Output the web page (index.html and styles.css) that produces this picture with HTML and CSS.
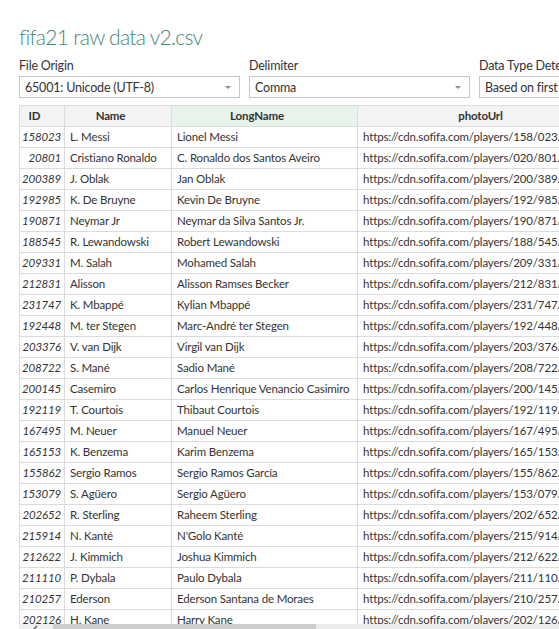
FILE: index.html
```html
<!DOCTYPE html>
<html lang="en">
<head>
<meta charset="utf-8">
<title>fifa21 raw data v2.csv</title>
<link rel="stylesheet" href="styles.css">
</head>
<body>
<div class="page">
  <h1 class="title">fifa21 raw data v2.csv</h1>
  <div class="options">
    <div class="field">
      <label class="label">File Origin</label>
      <div class="select"><span>65001: Unicode (UTF-8)</span><span class="caret"></span></div>
    </div>
    <div class="field">
      <label class="label">Delimiter</label>
      <div class="select"><span>Comma</span><span class="caret"></span></div>
    </div>
    <div class="field">
      <label class="label">Data Type Detection</label>
      <div class="select"><span>Based on first 200 rows</span><span class="caret"></span></div>
    </div>
  </div>
  <div class="grid-wrap">
    <table class="grid">
      <colgroup>
        <col class="c-id"><col class="c-name"><col class="c-long"><col class="c-url">
      </colgroup>
      <thead>
        <tr><th>ID</th><th>Name</th><th class="sel">LongName</th><th>photoUrl</th></tr>
      </thead>
      <tbody>
        <tr><td class="id">158023</td><td>L. Messi</td><td>Lionel Messi</td><td>https://cdn.sofifa.com/players/158/023/21_60.png</td></tr>
        <tr><td class="id">20801</td><td>Cristiano Ronaldo</td><td>C. Ronaldo dos Santos Aveiro</td><td>https://cdn.sofifa.com/players/020/801/21_60.png</td></tr>
        <tr><td class="id">200389</td><td>J. Oblak</td><td>Jan Oblak</td><td>https://cdn.sofifa.com/players/200/389/21_60.png</td></tr>
        <tr><td class="id">192985</td><td>K. De Bruyne</td><td>Kevin De Bruyne</td><td>https://cdn.sofifa.com/players/192/985/21_60.png</td></tr>
        <tr><td class="id">190871</td><td>Neymar Jr</td><td>Neymar da Silva Santos Jr.</td><td>https://cdn.sofifa.com/players/190/871/21_60.png</td></tr>
        <tr><td class="id">188545</td><td>R. Lewandowski</td><td>Robert Lewandowski</td><td>https://cdn.sofifa.com/players/188/545/21_60.png</td></tr>
        <tr><td class="id">209331</td><td>M. Salah</td><td>Mohamed Salah</td><td>https://cdn.sofifa.com/players/209/331/21_60.png</td></tr>
        <tr><td class="id">212831</td><td>Alisson</td><td>Alisson Ramses Becker</td><td>https://cdn.sofifa.com/players/212/831/21_60.png</td></tr>
        <tr><td class="id">231747</td><td>K. Mbappé</td><td>Kylian Mbappé</td><td>https://cdn.sofifa.com/players/231/747/21_60.png</td></tr>
        <tr><td class="id">192448</td><td>M. ter Stegen</td><td>Marc-André ter Stegen</td><td>https://cdn.sofifa.com/players/192/448/21_60.png</td></tr>
        <tr><td class="id">203376</td><td>V. van Dijk</td><td>Virgil van Dijk</td><td>https://cdn.sofifa.com/players/203/376/21_60.png</td></tr>
        <tr><td class="id">208722</td><td>S. Mané</td><td>Sadio Mané</td><td>https://cdn.sofifa.com/players/208/722/21_60.png</td></tr>
        <tr><td class="id">200145</td><td>Casemiro</td><td>Carlos Henrique Venancio Casimiro</td><td>https://cdn.sofifa.com/players/200/145/21_60.png</td></tr>
        <tr><td class="id">192119</td><td>T. Courtois</td><td>Thibaut Courtois</td><td>https://cdn.sofifa.com/players/192/119/21_60.png</td></tr>
        <tr><td class="id">167495</td><td>M. Neuer</td><td>Manuel Neuer</td><td>https://cdn.sofifa.com/players/167/495/21_60.png</td></tr>
        <tr><td class="id">165153</td><td>K. Benzema</td><td>Karim Benzema</td><td>https://cdn.sofifa.com/players/165/153/21_60.png</td></tr>
        <tr><td class="id">155862</td><td>Sergio Ramos</td><td>Sergio Ramos García</td><td>https://cdn.sofifa.com/players/155/862/21_60.png</td></tr>
        <tr><td class="id">153079</td><td>S. Agüero</td><td>Sergio Agüero</td><td>https://cdn.sofifa.com/players/153/079/21_60.png</td></tr>
        <tr><td class="id">202652</td><td>R. Sterling</td><td>Raheem Sterling</td><td>https://cdn.sofifa.com/players/202/652/21_60.png</td></tr>
        <tr><td class="id">215914</td><td>N. Kanté</td><td>N'Golo Kanté</td><td>https://cdn.sofifa.com/players/215/914/21_60.png</td></tr>
        <tr><td class="id">212622</td><td>J. Kimmich</td><td>Joshua Kimmich</td><td>https://cdn.sofifa.com/players/212/622/21_60.png</td></tr>
        <tr><td class="id">211110</td><td>P. Dybala</td><td>Paulo Dybala</td><td>https://cdn.sofifa.com/players/211/110/21_60.png</td></tr>
        <tr><td class="id">210257</td><td>Ederson</td><td>Ederson Santana de Moraes</td><td>https://cdn.sofifa.com/players/210/257/21_60.png</td></tr>
        <tr><td class="id">202126</td><td>H. Kane</td><td>Harry Kane</td><td>https://cdn.sofifa.com/players/202/126/21_60.png</td></tr>
      </tbody>
    </table>
  </div>
  <div class="hscroll">
    <div class="hs-btn"><svg width="8" height="8" viewBox="0 0 8 8"><path d="M5 1 L2 4 L5 7" fill="none" stroke="#555" stroke-width="1.3"/></svg></div>
    <div class="hs-thumb"></div>
    <div class="hs-track"></div>
  </div>
</div>
</body>
</html>
```

FILE: styles.css
```css
html, body {
  margin: 0;
  padding: 0;
  overflow: hidden;
  background: #ffffff;
}

body {
  width: 559px;
  height: 629px;
  font-family: Lato, "Liberation Sans", Arial, sans-serif;
  color: #333333;
}

.page {
  padding: 0 0 0 19px;
  width: 760px;
}

.title {
  margin: 0;
  padding-top: 24px;
  height: 32px;
  font-family: Lato, "Open Sans", sans-serif;
  font-weight: 300;
  font-size: 21px;
  line-height: 26px;
  color: #3f8a76;
  letter-spacing: -0.7px;
}

.options {
  display: grid;
  grid-template-columns: 221px 221px 221px;
  column-gap: 9px;
}

.field {
  display: flex;
  flex-direction: column;
}

.label {
  font-size: 12.5px;
  letter-spacing: -0.2px;
  line-height: 16px;
  height: 20px;
  color: #333333;
  padding-top: 2px;
  box-sizing: border-box;
}

.select {
  box-sizing: border-box;
  height: 22px;
  border: 1px solid #c6c6c6;
  display: flex;
  align-items: center;
  justify-content: space-between;
  padding: 0 8px 0 5px;
  font-size: 12.5px;
  letter-spacing: -0.2px;
  color: #333333;
  white-space: nowrap;
  overflow: hidden;
}

.caret {
  width: 0;
  height: 0;
  border-left: 3px solid transparent;
  border-right: 3px solid transparent;
  border-top: 3px solid #8a8a8a;
  flex: none;
}

.grid-wrap {
  margin-top: 7px;
  height: 519px;
  overflow: hidden;
}

.grid {
  border-collapse: collapse;
  table-layout: fixed;
  width: 599px;
  font-size: 11.5px;
  letter-spacing: -0.15px;
}

.c-id { width: 45px; }
.c-name { width: 107px; }
.c-long { width: 186px; }
.c-url { width: 261px; }

.grid th,
.grid td {
  border: 1px solid #dcdcdc;
  height: 20px;
  padding: 0 5px;
  white-space: nowrap;
  overflow: hidden;
  line-height: 20px;
  color: #333333;
}

.grid th {
  background: #f3f3f3;
  font-weight: 700;
  text-align: center;
  padding-right: 20px;
}

.grid th.sel {
  background: #e8f3ec;
}

.grid td.id {
  font-style: italic;
  text-align: right;
  padding: 0 3px 0 2px;
}

.hscroll {
  display: flex;
  height: 17px;
  width: 540px;
  background: #ececec;
}

.hs-btn {
  width: 34px;
  display: flex;
  align-items: flex-start;
  justify-content: center;
  padding-top: 1px;
  background: #f0f0f0;
}

.hs-thumb {
  width: 263px;
  background: #cdcdcd;
}

.hs-track {
  flex: 1;
  background: #ececec;
}
```
